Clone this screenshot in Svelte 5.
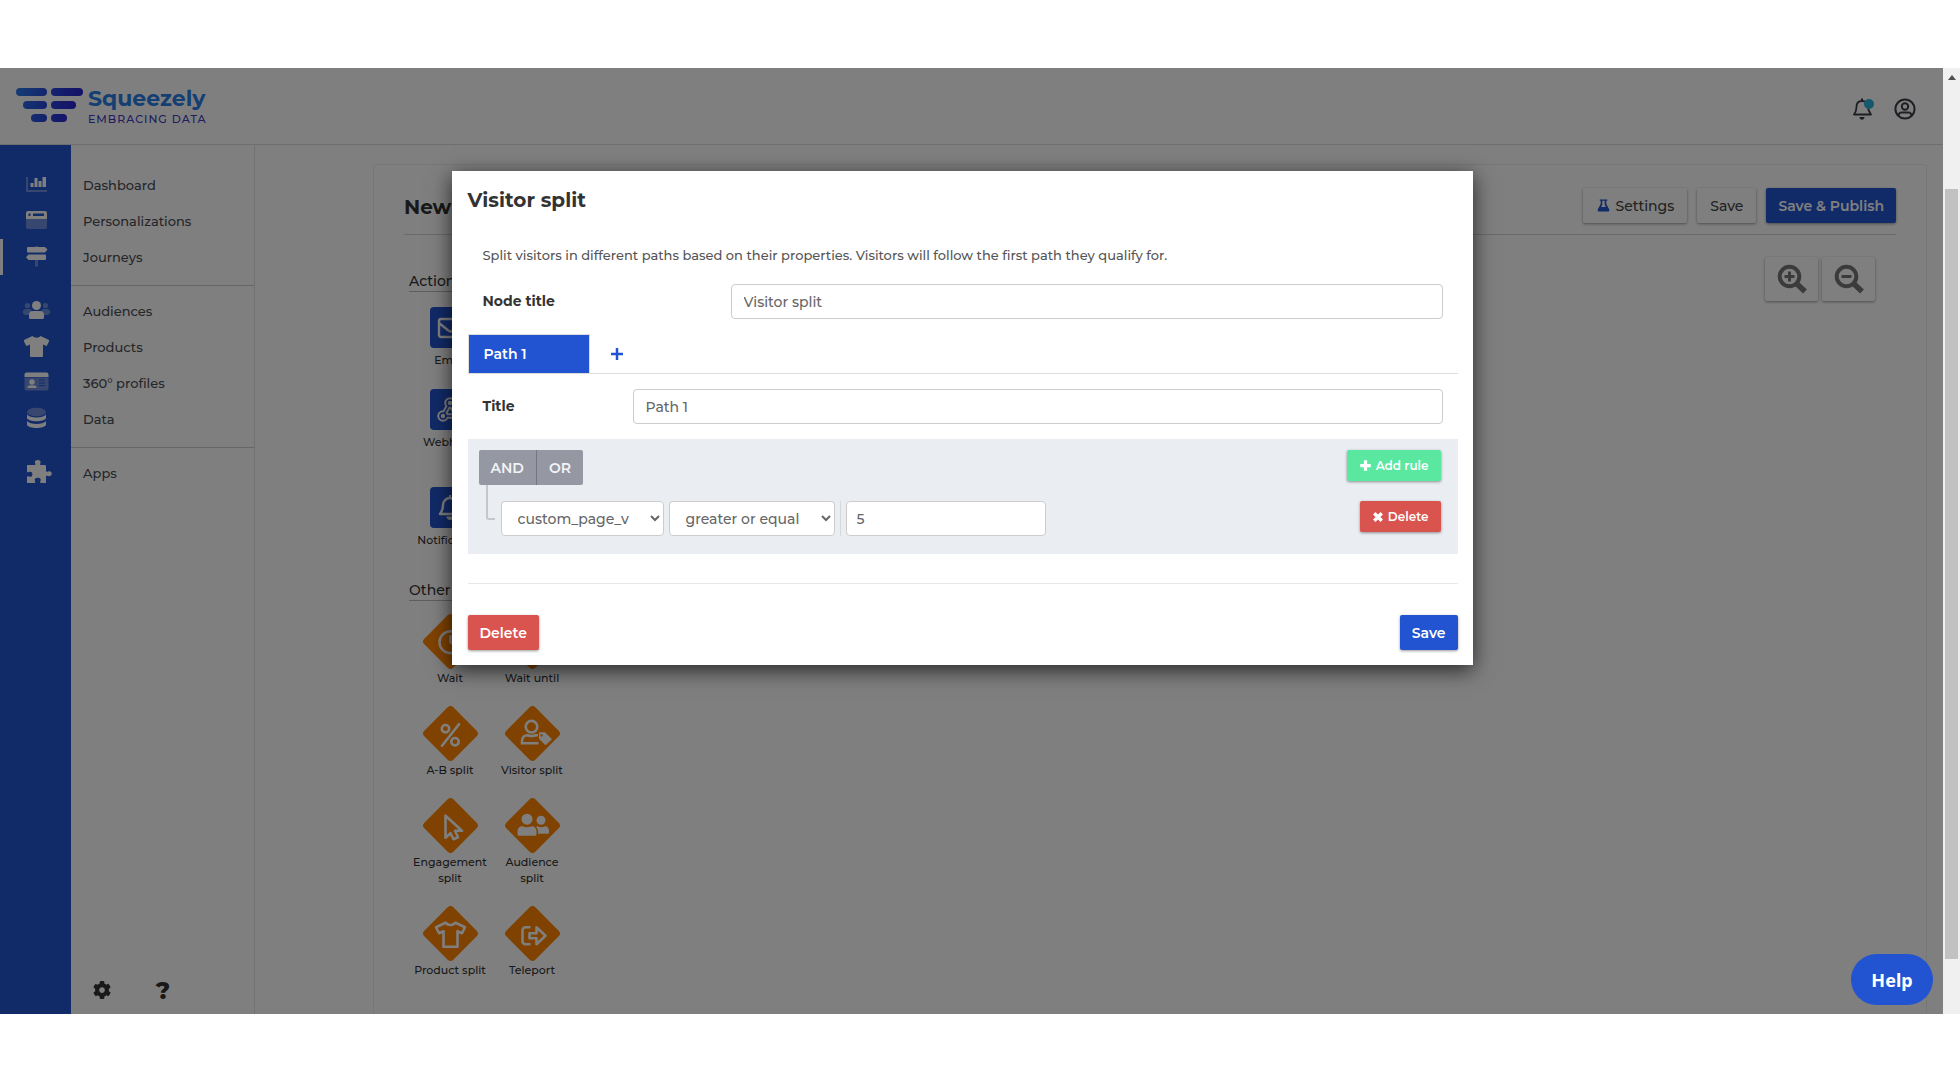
<script lang="ts">
    type Tool = { label: string; icon: string; tall?: boolean };

    let nodeTitle: string = "Visitor split";
    let pathTitle: string = "Path 1";
    let field: string = "custom_page_v";
    let comparison: string = "greater or equal";
    let ruleValue: string = "5";

    const navGroups = [
        [
            { label: "Dashboard", icon: "chart" },
            { label: "Personalizations", icon: "window" },
            { label: "Journeys", icon: "signs", active: true },
        ],
        [
            { label: "Audiences", icon: "users" },
            { label: "Products", icon: "shirt" },
            { label: "360° profiles", icon: "card" },
            { label: "Data", icon: "database" },
        ],
        [{ label: "Apps", icon: "puzzle" }],
    ];

    const actions: Tool[] = [
        { label: "Email", icon: "mail" },
        { label: "Webhook", icon: "webhook", tall: true },
        { label: "Notification", icon: "bell" },
    ];

    const others: Tool[] = [
        { label: "Wait", icon: "clock" },
        { label: "Wait until", icon: "clock" },
        { label: "A-B split", icon: "percent" },
        { label: "Visitor split", icon: "userTag" },
        { label: "Engagement split", icon: "pointer" },
        { label: "Audience split", icon: "friends" },
        { label: "Product split", icon: "shirtLine" },
        { label: "Teleport", icon: "exit" },
    ];

    // every icon is drawn on a 32x32 grid, one unit per pixel
    const icons: Record<string, string> = {
        chart: `<path d="M6 8h2v13h19v2H7a1 1 0 0 1-1-1z" opacity=".35"/><path d="M10.500 14h3v4h-3zM14.500 9h3v9h-3zM18.500 12h3v6h-3zM22.500 8h3.500v10h-3.500z"/>`,
        window: `<path d="M6 14h21v8a2 2 0 0 1-2 2H8a2 2 0 0 1-2-2z" opacity=".35"/><path fill-rule="evenodd" d="M8 6h17a2 2 0 0 1 2 2v6H6V8a2 2 0 0 1 2-2zM8.500 8.500v2.500h2V8.500zM13 8.500v2.500h11V8.500z"/>`,
        signs: `<path d="M15 5h3v3h-3zM15 19h3v6.500h-3z" opacity=".35"/><path d="M8 6h17l2.500 2.500L25 11.500H8a1 1 0 0 1-1-1V7a1 1 0 0 1 1-1zM8.500 13.500H25a1 1 0 0 1 1 1V18a1 1 0 0 1-1 1H8.500L6 16.300z"/>`,
        users: `<g opacity=".35"><circle cx="7.500" cy="10.500" r="2.600"/><circle cx="25.500" cy="10.500" r="2.600"/><rect x="3" y="14" width="9" height="6" rx="3"/><rect x="21" y="14" width="9" height="6" rx="3"/></g><circle cx="16.500" cy="10.500" r="4.500"/><path d="M13 16h7a4 4 0 0 1 4 4v2.500a1.500 1.500 0 0 1-1.500 1.500h-12A1.500 1.500 0 0 1 9 22.500V20a4 4 0 0 1 4-4z"/>`,
        shirt: `<path d="M12.500 5c2 2.200 6 2.200 8 0l8 3.800c.7.400.9.900.6 1.500l-2 4c-.3.600-.8.800-1.400.5L23 13.600V25a1 1 0 0 1-1 1H11a1 1 0 0 1-1-1V13.600l-2.700 1.200c-.6.300-1.100.1-1.400-.5l-2-4c-.3-.6-.1-1.100.6-1.500z"/>`,
        card: `<path d="M4.500 10.500h24v11a2 2 0 0 1-2 2h-20a2 2 0 0 1-2-2z" opacity=".35"/><path d="M6.500 5.500h20a2 2 0 0 1 2 2V10h-24V7.500a2 2 0 0 1 2-2z"/><circle cx="12" cy="15" r="2.700"/><path d="M9.500 18.500h5a2 2 0 0 1 2 2v.500h-9v-.500a2 2 0 0 1 2-2z"/><path d="M19 12.500h6v1h-6zM19 15.500h6v1h-6zM19 18h6v1h-6z" fill="#2254d1"/>`,
        database: `<ellipse cx="16.500" cy="9" rx="9.500" ry="4.300" opacity=".35"/><path d="M7 11.500c3 4 16 4 19 0v3.800c-2 4-17 4-19 0zM7 18c3 4 16 4 19 0v4c-2 4-17 4-19 0z"/>`,
        puzzle: `<path d="M8 8h6.500c1.500 0 1-1 .500-2-1.500-4 7-4 5.500 0-.500 1-1 2 .500 2H25c1 0 1 1 1 2v3.500c0 1.500 1 1.500 2 1 5-2 5 6 0 4.500-1-.500-2-.500-2 1V25c0 1 0 1-1 1h-4c-1 0-1-1-.500-2 2-4.500-7.500-4.500-5.500 0 .500 1 .500 2-1 2H8c-1 0-1 0-1-1v-5c0-1 1-1 2-.500 4.500 2 4.500-6.500 0-4.500-1 .500-2 .500-2-.500V9c0-1 0-1 1-1z"/>`,
        mail: `<path d="M7 7h19a2 2 0 0 1 2 2v14a2 2 0 0 1-2 2H7a2 2 0 0 1-2-2V9a2 2 0 0 1 2-2zM5 11l10 8q1.500 1 3 0l10-8" fill="none" stroke="currentColor" stroke-width="2.400"/>`,
        webhook: `<g fill="none" stroke="currentColor" stroke-width="5.500"><circle cx="9" cy="22" r="3"/><circle cx="16" cy="9" r="3"/><circle cx="24" cy="22" r="3"/><path d="M17 11l5 9M15 11l-5 9M11 22h11"/></g><g fill="none" stroke="#2254d1" stroke-width="1.500"><circle cx="9" cy="22" r="3"/><circle cx="16" cy="9" r="3"/><circle cx="24" cy="22" r="3"/><path d="M17 11l5 9M15 11l-5 9M11 22h11"/></g>`,
        bell: `<path d="M16 6a7 7 0 0 0-7 7c0 5-1.500 7-3 9h20c-1.500-2-3-4-3-9a7 7 0 0 0-7-7z" fill="none" stroke="currentColor" stroke-width="2.400" stroke-linejoin="round"/><path d="M15 3h2v3h-2zM12.500 24.500h7c0 4.500-7 4.500-7 0z"/>`,
        clock: `<circle cx="16" cy="16" r="11" fill="none" stroke="currentColor" stroke-width="2.400"/><path d="M16 9v7l4 3" fill="none" stroke="currentColor" stroke-width="2.400"/>`,
        percent: `<g fill="none" stroke="currentColor" stroke-width="2.600" stroke-linecap="round"><circle cx="11" cy="10.500" r="3.700"/><circle cx="20.500" cy="23.500" r="3.700"/><path d="M24.500 6L7.500 27.500"/></g>`,
        userTag: `<g fill="none" stroke="currentColor" stroke-width="2.600"><circle cx="15" cy="8.500" r="5.800"/><path d="M22 25H5.500v-2c0-4 2.500-6 5.500-6q4 1.600 8 0h2.500"/></g><path fill-rule="evenodd" d="M23 14h5.500l7 7-6.500 6-6.500-6.500v-6zM25 16a1.200 1.200 0 1 0 .1 0z"/>`,
        pointer: `<path d="M11 5.500v22l5-4.500 3 6 4.500-2-3-6.500h7z" fill="none" stroke="currentColor" stroke-width="2.600" stroke-linejoin="round"/>`,
        friends: `<circle cx="10.500" cy="9" r="5.500"/><circle cx="24.500" cy="10" r="4.500"/><path d="M6 16q4.500 2 9 0c3 0 5 2 5 5v3q0 1.500-1.500 1.500h-16Q1 25.500 1 24v-3c0-3 2-5 5-5zM21 16q4 2 7.500 0c2.500 0 4 2 4 4.500V22q0 1.500-1.500 1.500h-9.500c.500-3 0-5-2-6.800z"/>`,
        shirtLine: `<path d="M11 4.500c3 3 7 3 10 0L30.500 9l-3 6-4.500-2v15.500H9V13l-4.500 2-3-6z" fill="none" stroke="currentColor" stroke-width="2.600" stroke-linejoin="round"/>`,
        exit: `<g fill="none" stroke="currentColor" stroke-width="2.600" stroke-linejoin="round"><path d="M14 9H9a3 3 0 0 0-3 3v11a3 3 0 0 0 3 3h5"/><path d="M13 15h7V9l9 8.500-9 8.500v-6h-7z"/></g>`,
        account: `<g fill="none" stroke="currentColor" stroke-width="2"><circle cx="16" cy="16" r="9.600"/><circle cx="16" cy="13.500" r="3.200"/><path d="M9.500 22.500c1-4 3-3 6.500-3s5.500-1 6.500 3"/></g>`,
        bellThin: `<path d="M16 8c-4 0-5.500 3-5.500 6 0 3.500-1 5.500-2.500 7.500h17c-1.500-2-3-4-3-7.500 0-3-2-6-6-6z" fill="none" stroke="currentColor" stroke-width="1.800" stroke-linejoin="round"/><path d="M15 5.500h2V8h-2zM13.500 24h5c0 3.500-5 3.500-5 0z"/>`,
        flask: `<path fill-rule="evenodd" d="M8 3h16v3h-2v7l6 11c1.300 2.500.2 5-2.500 5h-19C3.800 29 2.700 26.500 4 24l6-11V6H8zM13.500 6v8l-2.500 5h10L18.500 14V6z"/>`,
        zoomIn: `<g fill="none" stroke="currentColor"><circle cx="13.500" cy="13.500" r="9.800" stroke-width="4"/><path d="M20.500 20.500l8.500 8" stroke-width="5.500"/><path d="M8.500 13.500h10M13.500 8.500v10" stroke-width="3"/></g>`,
        zoomOut: `<g fill="none" stroke="currentColor"><circle cx="13.500" cy="13.500" r="9.800" stroke-width="4"/><path d="M20.500 20.500l8.500 8" stroke-width="5.500"/><path d="M8.500 13.500h10" stroke-width="3"/></g>`,
        cog: `<g transform="translate(6.800 6.800) scale(.036)"><path d="M487.400 315.700l-42.600-24.600c4.300-23.200 4.300-47 0-70.200l42.600-24.600c4.900-2.800 7.100-8.600 5.500-14-11.100-35.600-30-67.800-54.700-94.600-3.800-4.100-10-5.100-14.800-2.300L380.800 110c-17.900-15.400-38.500-27.300-60.800-35.100V25.800c0-5.600-3.900-10.500-9.400-11.700-36.700-8.200-74.300-7.800-109.200 0-5.500 1.200-9.400 6.100-9.400 11.700V75c-22.200 7.900-42.800 19.800-60.800 35.100L88.700 85.500c-4.900-2.800-11-1.900-14.800 2.300-24.700 26.700-43.600 58.900-54.700 94.600-1.700 5.400.6 11.200 5.500 14L67.300 221c-4.300 23.200-4.300 47 0 70.200l-42.600 24.600c-4.900 2.800-7.100 8.600-5.500 14 11.100 35.600 30 67.800 54.700 94.600 3.800 4.100 10 5.100 14.800 2.300l42.600-24.600c17.900 15.400 38.500 27.300 60.800 35.100v49.200c0 5.600 3.900 10.500 9.400 11.700 36.700 8.200 74.300 7.800 109.200 0 5.500-1.200 9.400-6.100 9.400-11.700v-49.200c22.200-7.900 42.800-19.800 60.800-35.100l42.600 24.600c4.900 2.800 11 1.900 14.800-2.300 24.700-26.700 43.600-58.900 54.700-94.600 1.500-5.500-.7-11.300-5.600-14.100zM256 336c-44.100 0-80-35.900-80-80s35.900-80 80-80 80 35.900 80 80-35.900 80-80 80z"/></g>`,
        plus: `<path d="M12 3h8v9h9v8h-9v9h-8v-9H3v-8h9z"/>`,
        plusThin: `<path d="M13.500 4h5v9.500H28v5h-9.500V28h-5v-9.500H4v-5h9.500z"/>`,
        cross: `<path d="M6 6l20 20M26 6L6 26" stroke="currentColor" stroke-width="9"/>`,
    };
</script>

{#snippet icon(name: string, size: number = 32)}
    <svg width={size} height={size} viewBox="0 0 32 32" fill="currentColor" aria-hidden="true">{@html icons[name]}</svg>
{/snippet}

{#snippet toolGroup(title: string, tools: Tool[], shape: string)}
    <section class="tools {shape}">
        <h2>{title}</h2>
        <div class="tool-grid">
            {#each tools as tool}
                <div class="tool" class:tall={tool.tall}>
                    <span class="tool-shape">
                        <span class="tool-icon">{@render icon(tool.icon)}</span>
                    </span>
                    <span class="tool-label">{tool.label}</span>
                </div>
            {/each}
        </div>
    </section>
{/snippet}

<div class="screen">
    <div class="app">
        <div class="page">
            <header class="topbar">
                <a href="#home" class="logo">
                    <svg width="68" height="36" viewBox="0 0 68 36" aria-hidden="true">
                        <defs>
                            <linearGradient id="bars" gradientUnits="userSpaceOnUse" x1="0" y1="0" x2="64" y2="20">
                                <stop offset="0" stop-color="#2b7be8" />
                                <stop offset=".5" stop-color="#2848dc" />
                                <stop offset="1" stop-color="#2a1fd0" />
                            </linearGradient>
                        </defs>
                        <g fill="url(#bars)">
                            <rect x="0" y="0" width="31" height="8" rx="4" />
                            <rect x="35" y="0" width="32" height="8" rx="4" />
                            <rect x="7" y="13" width="24" height="8" rx="4" />
                            <rect x="35" y="13" width="25" height="8" rx="4" />
                            <rect x="15" y="26" width="16" height="8" rx="4" />
                            <rect x="35" y="26" width="16" height="8" rx="4" />
                        </g>
                    </svg>
                    <span class="wordmark">
                        <strong>Squeezely</strong>
                        <small>EMBRACING DATA</small>
                    </span>
                </a>
                <div class="account">
                    <button class="plain bell" aria-label="Notifications">
                        {@render icon("bellThin")}
                        <span class="dot"></span>
                    </button>
                    <button class="plain" aria-label="Account">{@render icon("account")}</button>
                </div>
            </header>

            <div class="body">
                <nav>
                    {#each navGroups as group}
                        <ul>
                            {#each group as item}
                                <li>
                                    <a href="#{item.icon}" class:active={item.active}>
                                        <span class="nav-icon">{@render icon(item.icon)}</span>
                                        {item.label}
                                    </a>
                                </li>
                            {/each}
                        </ul>
                    {/each}
                    <div class="nav-foot">
                        <button class="plain" aria-label="Settings">{@render icon("cog")}</button>
                        <button class="plain question">?</button>
                    </div>
                </nav>

                <main>
                    <div class="card">
                        <div class="card-head">
                            <h1>New</h1>
                            <button class="btn light"><span class="blue">{@render icon("flask", 15)}</span>Settings</button>
                            <button class="btn light">Save</button>
                            <button class="btn primary">Save &amp; Publish</button>
                        </div>
                        <div class="canvas">
                            <div class="toolbox">
                                {@render toolGroup("Actions", actions, "square")}
                                {@render toolGroup("Other", others, "diamond")}
                            </div>
                            <div class="zoom">
                                <button class="btn light" aria-label="Zoom in">{@render icon("zoomIn")}</button>
                                <button class="btn light" aria-label="Zoom out">{@render icon("zoomOut")}</button>
                            </div>
                        </div>
                    </div>
                </main>
            </div>

            <div class="backdrop">
                <div class="modal" role="dialog" aria-modal="true" aria-labelledby="modal-title">
                    <h2 id="modal-title">Visitor split</h2>
                    <p>Split visitors in different paths based on their properties. Visitors will follow the first path they qualify for.</p>
                    <div class="form-row">
                        <label for="node-title">Node title</label>
                        <input id="node-title" type="text" bind:value={nodeTitle} />
                    </div>
                    <div class="tabs">
                        <button class="tab">Path 1</button>
                        <button class="add-tab" aria-label="Add path">{@render icon("plusThin", 16)}</button>
                    </div>
                    <div class="form-row narrow">
                        <label for="path-title">Title</label>
                        <input id="path-title" type="text" bind:value={pathTitle} />
                    </div>

                    <div class="rules">
                        <div class="rules-head">
                            <div class="logic">
                                <button>AND</button>
                                <button>OR</button>
                            </div>
                            <button class="btn small green">{@render icon("plus", 13)}Add rule</button>
                        </div>
                        <div class="rule">
                            <span class="branch"></span>
                            <select class="field" aria-label="Property" bind:value={field}>
                                <option>custom_page_v</option>
                            </select>
                            <select class="comparison" aria-label="Comparison" bind:value={comparison}>
                                <option>greater or equal</option>
                            </select>
                            <span class="divider"></span>
                            <input type="text" aria-label="Value" bind:value={ruleValue} />
                            <button class="btn small red">{@render icon("cross", 12)}Delete</button>
                        </div>
                    </div>

                    <div class="modal-foot">
                        <button class="btn red">Delete</button>
                        <button class="btn primary">Save</button>
                    </div>
                </div>
            </div>

            <button class="help">Help</button>
        </div>

        <div class="scrollbar">
            <span class="arrow"></span>
            <span class="thumb"></span>
        </div>
    </div>
</div>

<style>
    :global(body) {
        background: #fff;
    }
    .screen,
    .screen :global(*) {
        box-sizing: border-box;
    }
    .screen {
        display: flex;
        flex-direction: column;
        min-height: 100vh;
        padding: 68px 0 66px;
        font-family: Montserrat, Inter, sans-serif;
        font-size: 14px;
        font-weight: 500;
        color: #333;
    }
    svg {
        display: block;
        flex: none;
        overflow: visible;
    }
    button,
    input,
    select {
        font: inherit;
        color: inherit;
    }
    button {
        cursor: pointer;
    }
    h1,
    h2,
    p,
    ul {
        margin: 0;
        padding: 0;
    }
    .app {
        display: flex;
        flex: 1;
    }
    .page {
        position: relative;
        display: flex;
        flex-direction: column;
        flex: 1;
        overflow: hidden;
    }
    .plain {
        padding: 0;
        border: none;
        background: none;
    }

    /* top bar */
    .topbar {
        display: flex;
        align-items: center;
        justify-content: space-between;
        height: 77px;
        padding: 0 22px 0 16px;
        border-bottom: 1px solid #dcdcdc;
    }
    .logo {
        display: flex;
        gap: 4px;
        align-items: center;
        text-decoration: none;
    }
    .wordmark {
        display: flex;
        flex-direction: column;
    }
    .wordmark strong {
        font-size: 22px;
        line-height: 26px;
        color: #2a7ee6;
    }
    .wordmark small {
        font-size: 11px;
        line-height: 14px;
        letter-spacing: 1px;
        color: #4238c0;
    }
    .account {
        display: flex;
        gap: 11px;
        padding-top: 6px;
        color: #3b3e45;
    }
    .bell {
        position: relative;
    }
    .dot {
        position: absolute;
        top: 6px;
        right: 4px;
        width: 10px;
        height: 10px;
        border-radius: 50%;
        background: #2bb3dc;
    }

    /* navigation */
    .body {
        display: flex;
        flex: 1;
    }
    nav {
        display: flex;
        flex-direction: column;
        width: 255px;
        padding-top: 15px;
        border-right: 1px solid #e4e4e4;
        background: linear-gradient(90deg, #2254d1 71px, #fff 71px);
        font-size: 13px;
    }
    ul {
        padding: 7px 0 10px;
        list-style: none;
    }
    ul + ul {
        border-top: 1px solid;
        border-image: linear-gradient(90deg, transparent 71px, #cfcfcf 71px) 1;
    }
    nav a {
        display: flex;
        align-items: center;
        height: 36px;
        border-left: 3px solid transparent;
        color: #4a4d55;
        text-decoration: none;
    }
    nav a.active {
        border-left-color: #fff;
    }
    .nav-icon {
        width: 80px;
        padding-left: 17px;
        color: #fff;
    }
    .nav-foot {
        display: flex;
        align-items: center;
        gap: 29px;
        height: 48px;
        margin-top: auto;
        padding-left: 86px;
    }
    .question {
        width: 32px;
        font-size: 24px;
        font-weight: 800;
    }

    /* journey editor */
    main {
        display: flex;
        flex: 1;
        padding: 19px 16px 0 118px;
    }
    .card {
        flex: 1;
        padding: 23px 30px 0;
        border: 1px solid #eee;
        border-bottom: none;
        border-radius: 4px 4px 0 0;
    }
    .card-head {
        display: flex;
        gap: 10px;
        height: 47px;
        border-bottom: 1px solid #d4d4d4;
    }
    h1 {
        flex: 1;
        font-size: 20px;
        line-height: 38px;
    }
    .btn {
        display: flex;
        align-items: center;
        justify-content: center;
        height: 35px;
        padding: 0 12px;
        border: none;
        border-radius: 2px;
        box-shadow: 0 1px 3px rgba(0, 0, 0, 0.4);
        color: #fff;
        font-weight: 600;
    }
    .light {
        padding: 0 13px;
        background: #fff;
        color: #444;
        font-weight: 500;
    }
    .primary {
        background: #2254d1;
    }
    .red {
        background: #d9534f;
    }
    .green {
        background: #5ae8a0;
    }
    .blue {
        margin-right: 5px;
        color: #2254d1;
    }
    .small {
        gap: 4px;
        height: 31px;
        font-size: 12px;
    }
    .canvas {
        display: flex;
        justify-content: space-between;
        padding: 22px 21px 0 5px;
    }
    .zoom {
        display: flex;
        gap: 4px;
    }
    .zoom .btn {
        width: 53px;
        height: 44px;
        color: #777;
    }
    .toolbox {
        width: 164px;
        padding-top: 14px;
    }
    .tools h2 {
        height: 21px;
        border-bottom: 1px solid #bbb;
        font-size: 14px;
        font-weight: 500;
        line-height: 20px;
    }
    .tool-grid {
        display: grid;
        grid-template-columns: 1fr 1fr;
    }
    .square .tool-grid {
        grid-template-columns: 1fr;
        width: 82px;
        padding: 15px 0 11px;
    }
    .diamond .tool-grid {
        padding-top: 13px;
    }
    .tool {
        display: flex;
        flex-direction: column;
        align-items: center;
        padding-bottom: 21px;
    }
    .tall {
        padding-bottom: 37px;
    }
    .tool-shape {
        display: flex;
        align-items: center;
        justify-content: center;
        width: 41px;
        height: 41px;
        margin-bottom: 4px;
        border-radius: 4px;
        background: #2254d1;
        color: #fff;
    }
    .diamond .tool {
        padding-bottom: 20px;
    }
    .diamond .tool-shape {
        margin: 7px 7px 8px;
        background: #ff8500;
        transform: rotate(45deg);
    }
    .diamond .tool-icon {
        transform: rotate(-45deg);
    }
    .tool-label {
        width: 78px;
        font-size: 11px;
        line-height: 16px;
        text-align: center;
    }

    /* dialog */
    .backdrop {
        position: absolute;
        inset: 0;
        display: flex;
        align-items: flex-start;
        justify-content: center;
        padding: 103px 19px 0 0;
        background: rgba(0, 0, 0, 0.5);
    }
    .modal {
        width: 1021px;
        max-width: 100%;
        padding: 15px 15px 15px 16px;
        background: #fff;
        box-shadow: 0 5px 20px rgba(0, 0, 0, 0.7);
    }
    .modal h2 {
        font-size: 20px;
        line-height: 28px;
    }
    .modal p {
        padding: 31px 15px 19px;
        font-size: 13px;
        line-height: 20px;
        color: #555;
    }
    .form-row {
        display: flex;
        padding: 0 15px;
    }
    .form-row label {
        width: 248px;
        font-weight: 700;
        line-height: 34px;
    }
    .narrow label {
        width: 150px;
    }
    input,
    select {
        height: 35px;
        padding: 0 12px;
        border: 1px solid #ccc;
        border-radius: 4px;
        background: #fff;
        color: #666;
    }
    .form-row input {
        flex: 1;
    }
    .tabs {
        display: flex;
        margin: 15px 0;
        border-bottom: 1px solid #ddd;
    }
    .tab {
        width: 122px;
        height: 39px;
        padding: 0 15px;
        border: 1px solid #ddd;
        border-bottom: none;
        background: #2254d1;
        color: #fff;
        font-weight: 600;
        text-align: left;
    }
    .add-tab {
        padding: 0 19px;
        border: none;
        background: none;
        color: #2254d1;
    }
    .rules {
        height: 115px;
        margin-top: 15px;
        padding: 11px 17px 0 11px;
        background: #eaedf2;
    }
    .rules-head {
        display: flex;
        justify-content: space-between;
        margin-bottom: 16px;
    }
    .logic {
        display: flex;
    }
    .logic button {
        height: 35px;
        padding: 0 12px;
        border: none;
        background: #9598a2;
        color: #f2f3f6;
        font-weight: 600;
    }
    .logic button:first-child {
        border-right: 1px solid #737782;
        border-radius: 2px 0 0 2px;
    }
    .logic button:last-child {
        border-radius: 0 2px 2px 0;
    }
    .rule {
        display: flex;
    }
    .branch {
        width: 9px;
        height: 35px;
        margin: -16px 6px 0 7px;
        border: solid #c5c7cb;
        border-width: 0 0 2px 2px;
        border-radius: 0 0 0 3px;
    }
    .field {
        width: 163px;
        margin-right: 5px;
    }
    .comparison {
        width: 166px;
        margin-right: 5px;
    }
    .divider {
        width: 1px;
        margin-right: 5px;
        background: #d5d8dd;
    }
    .rule input {
        width: 200px;
        padding: 0 10px;
    }
    .rule .btn {
        margin-left: auto;
    }
    .modal-foot {
        display: flex;
        justify-content: space-between;
        margin-top: 29px;
        padding-top: 31px;
        border-top: 1px solid #e8e8e8;
    }
    .help {
        position: absolute;
        right: 10px;
        bottom: 9px;
        width: 82px;
        height: 51px;
        border: none;
        border-radius: 26px;
        background: #2254d1;
        color: #fff;
        font-family: "Noto Sans", sans-serif;
        font-size: 18px;
        font-weight: 700;
    }

    .scrollbar {
        display: flex;
        flex-direction: column;
        align-items: center;
        width: 17px;
        padding: 7px 0 55px;
        background: #f0f0f0;
    }
    .arrow {
        margin-bottom: 109px;
        border: 4px solid transparent;
        border-top: none;
        border-bottom: 5px solid #505050;
    }
    .thumb {
        flex: 1;
        width: 13px;
        background: #c1c1c1;
    }
</style>
